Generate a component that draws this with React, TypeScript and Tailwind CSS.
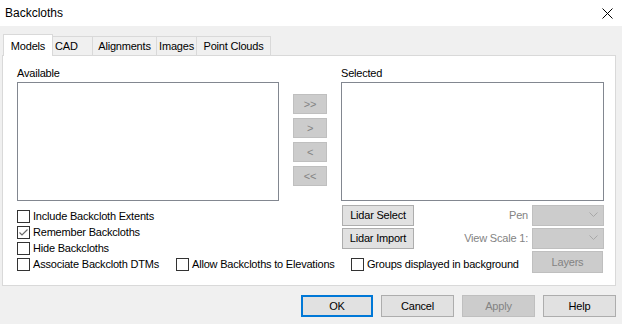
import React from "react";

const font = { fontFamily: '"Liberation Sans", Arial, sans-serif' };

function Checkbox({ label, checked = false }: { label: string; checked?: boolean }) {
  return (
    <div className="flex items-center h-[16px]">
      <div className="w-[13px] h-[13px] border border-[#333333] bg-white flex items-center justify-center shrink-0">
        {checked && (
          <svg width="11" height="11" viewBox="0 0 11 11">
            <path d="M1.5 5.5 L4 8 L9.5 2.5" fill="none" stroke="#6a6a6a" strokeWidth="1.2" />
          </svg>
        )}
      </div>
      <span className="ml-[3px] text-[11px] leading-[13px] text-black whitespace-nowrap">{label}</span>
    </div>
  );
}

function Btn({ label, className = "" }: { label: string; className?: string }) {
  return (
    <div
      className={`flex items-center justify-center border border-[#adadad] bg-[#e1e1e1] text-[11px] text-black ${className}`}
    >
      {label}
    </div>
  );
}

function DisBtn({ label, className = "" }: { label: string; className?: string }) {
  return (
    <div
      className={`flex items-center justify-center border border-[#bfbfbf] bg-[#cccccc] text-[11px] text-[#838383] ${className}`}
    >
      {label}
    </div>
  );
}

function Combo() {
  return (
    <div className="w-[72px] h-[21px] border border-[#bfbfbf] bg-[#cccccc] flex items-center justify-end pr-[5px]">
      <svg width="9" height="6" viewBox="0 0 9 6">
        <path d="M0.5 0.5 L4.5 4.5 L8.5 0.5" fill="none" stroke="#a8a8a8" strokeWidth="1" />
      </svg>
    </div>
  );
}

export default function App() {
  return (
    <div className="w-[622px] h-[324px] bg-[#f0f0f0] flex flex-col overflow-hidden tracking-[-0.2px]" style={font}>
      {/* title bar */}
      <div className="h-[26px] bg-white flex items-center justify-between pl-[5px] pr-[8px]">
        <span className="text-[12px] text-black tracking-normal">Backcloths</span>
        <svg width="11" height="11" viewBox="0 0 11 11" className="mr-[1px]">
          <path d="M0.5 0.5 L10.5 10.5 M10.5 0.5 L0.5 10.5" stroke="#000" strokeWidth="1" />
        </svg>
      </div>

      {/* tabs */}
      <div className="pl-[2px] pr-[6px] pt-[8px]">
        <div className="flex items-end h-[21px] pl-[1px] relative z-10">
          <div className="w-[50px] h-[22px] -mb-[1px] bg-white border border-b-0 border-[#d9d9d9] flex items-start pt-[3px] justify-center text-[11px] text-black">
            Models
          </div>
          <div className="w-[40px] h-[19px] bg-[#f0f0f0] border border-l-0 border-b-0 border-[#d9d9d9] flex items-center pl-[2px] text-[11px] text-black">
            CAD
          </div>
          <div className="w-[64px] h-[19px] bg-[#f0f0f0] border border-l-0 border-b-0 border-[#d9d9d9] flex items-center justify-center text-[11px] text-black">
            Alignments
          </div>
          <div className="w-[40px] h-[19px] bg-[#f0f0f0] border border-l-0 border-b-0 border-[#d9d9d9] flex items-center justify-center text-[11px] text-black">
            Images
          </div>
          <div className="w-[74px] h-[19px] bg-[#f0f0f0] border border-l-0 border-b-0 border-[#d9d9d9] flex items-center justify-center text-[11px] text-black">
            Point Clouds
          </div>
        </div>

        {/* panel */}
        <div className="h-[231px] bg-white border border-[#d9d9d9] pl-[14px] pt-[11px] flex flex-col">
          {/* lists row */}
          <div className="flex">
            <div className="flex flex-col w-[262px]">
              <div className="h-[15px] text-[11px] leading-[13px] text-black">Available</div>
              <div className="h-[119px] border border-[#828790] bg-white" />
            </div>
            <div className="w-[62px] flex flex-col items-center pt-[27px] gap-[4px]">
              <DisBtn label=">>" className="w-[34px] h-[20px]" />
              <DisBtn label=">" className="w-[34px] h-[20px]" />
              <DisBtn label="<" className="w-[34px] h-[20px]" />
              <DisBtn label="<<" className="w-[34px] h-[20px]" />
            </div>
            <div className="flex flex-col w-[263px]">
              <div className="h-[15px] text-[11px] leading-[13px] text-black">Selected</div>
              <div className="h-[119px] border border-[#828790] bg-white" />
            </div>
          </div>

          {/* lower area */}
          <div className="flex">
            <div className="w-[324px] pt-[7px] flex flex-col">
              <Checkbox label="Include Backcloth Extents" />
              <Checkbox label="Remember Backcloths" checked />
              <Checkbox label="Hide Backcloths" />
              <div className="flex">
                <Checkbox label="Associate Backcloth DTMs" />
                <div className="ml-[17px]">
                  <Checkbox label="Allow Backcloths to Elevations" />
                </div>
              </div>
            </div>
            <div className="w-[263px] pt-[3px] flex flex-col">
              <div className="flex items-center h-[22px]">
                <Btn label="Lidar Select" className="ml-[1px] w-[72px] h-[21px]" />
                <div className="flex-1 text-right pr-[4px] text-[11px] text-[#838383]">Pen</div>
                <Combo />
              </div>
              <div className="flex items-center h-[22px] mt-[1px]">
                <Btn label="Lidar Import" className="ml-[1px] w-[72px] h-[21px]" />
                <div className="flex-1 text-right pr-[4px] text-[11px] text-[#838383]">View Scale 1:</div>
                <Combo />
              </div>
              <div className="flex items-center h-[22px] mt-[2px]">
                <div className="ml-[10px] pt-[5px]">
                  <Checkbox label="Groups displayed in background" />
                </div>
                <div className="flex-1" />
                <DisBtn label="Layers" className="w-[71px] h-[22px] mr-[1px]" />
              </div>
            </div>
          </div>
        </div>
      </div>

      {/* footer */}
      <div className="flex justify-end gap-[8px] pr-[6px] pt-[9px]">
        <div className="w-[72px] h-[22px] flex items-center justify-center border-2 border-[#0078d7] bg-[#e1e1e1] text-[11px] text-black">
          OK
        </div>
        <Btn label="Cancel" className="w-[73px] h-[22px]" />
        <DisBtn label="Apply" className="w-[73px] h-[22px]" />
        <Btn label="Help" className="w-[73px] h-[22px]" />
      </div>
    </div>
  );
}
